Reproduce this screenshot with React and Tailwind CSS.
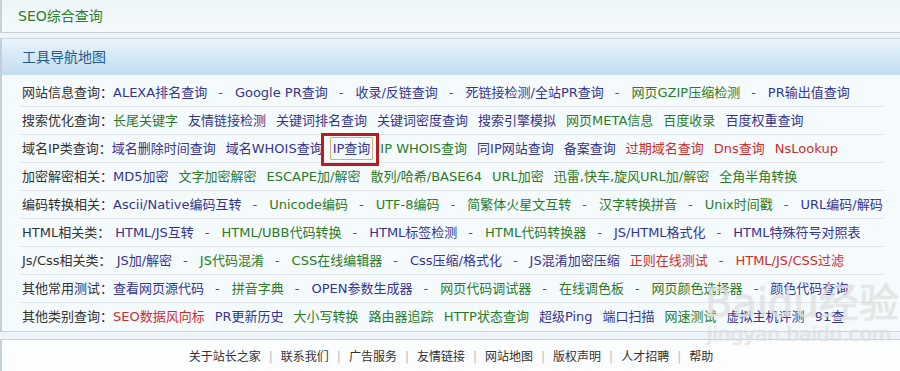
import React from "react";

const B = "text-[#35358f]";
const G = "text-[#2b7a2b]";
const R = "text-[#c9302c]";

const rows = [
  {
    label: "网站信息查询：",
    dash: true,
    items: [
      ["ALEXA排名查询", B],
      ["Google PR查询", B],
      ["收录/反链查询", B],
      ["死链接检测/全站PR查询", B],
      ["网页GZIP压缩检测", G],
      ["PR输出值查询", B],
    ],
  },
  {
    label: "搜索优化查询：",
    items: [
      ["长尾关键字", G],
      ["友情链接检测", B],
      ["关键词排名查询", B],
      ["关键词密度查询", B],
      ["搜索引擎模拟", B],
      ["网页META信息", G],
      ["百度收录", G],
      ["百度权重查询", B],
    ],
  },
  {
    label: "域名IP类查询：",
    items: [
      ["域名删除时间查询", B],
      ["域名WHOIS查询", B],
      ["IP查询", B, true],
      ["IP WHOIS查询", G],
      ["同IP网站查询", B],
      ["备案查询", B],
      ["过期域名查询", R],
      ["Dns查询", R],
      ["NsLookup", R],
    ],
  },
  {
    label: "加密解密相关：",
    items: [
      ["MD5加密", B],
      ["文字加密解密", G],
      ["ESCAPE加/解密", G],
      ["散列/哈希/BASE64", G],
      ["URL加密", G],
      ["迅雷,快车,旋风URL加/解密", G],
      ["全角半角转换", G],
    ],
  },
  {
    label: "编码转换相关：",
    dash: true,
    items: [
      ["Ascii/Native编码互转", B],
      ["Unicode编码", G],
      ["UTF-8编码", G],
      ["简繁体火星文互转", G],
      ["汉字转换拼音", G],
      ["Unix时间戳", G],
      ["URL编码/解码", B],
    ],
  },
  {
    label: "HTML相关类：",
    dash: true,
    pad: true,
    items: [
      ["HTML/JS互转", B],
      ["HTML/UBB代码转换", G],
      ["HTML标签检测", B],
      ["HTML代码转换器", G],
      ["JS/HTML格式化", B],
      ["HTML特殊符号对照表", B],
    ],
  },
  {
    label: "Js/Css相关类：",
    dash: true,
    pad: true,
    items: [
      ["JS加/解密", B],
      ["JS代码混淆", G],
      ["CSS在线编辑器", G],
      ["Css压缩/格式化", B],
      ["JS混淆加密压缩", B],
      ["正则在线测试", R, false, true],
      ["HTML/JS/CSS过滤", R],
    ],
  },
  {
    label: "其他常用测试：",
    dash: true,
    items: [
      ["查看网页源代码", B],
      ["拼音字典", G],
      ["OPEN参数生成器", B],
      ["网页代码调试器", G],
      ["在线调色板", G],
      ["网页颜色选择器", G],
      ["颜色代码查询", B],
    ],
  },
  {
    label: "其他类别查询：",
    items: [
      ["SEO数据风向标", R],
      ["PR更新历史", B],
      ["大小写转换", G],
      ["路由器追踪", G],
      ["HTTP状态查询", G],
      ["超级Ping", B],
      ["端口扫描", B],
      ["网速测试", G],
      ["虚拟主机评测", B],
      ["91查", B],
    ],
  },
];

function Row({ row, last }) {
  return (
    <div
      className={`h-[28px] flex items-center whitespace-nowrap pl-[2px] ${
        last ? "" : "border-b border-[#e1e6ea]"
      }`}
    >
      <span className="text-[#333333]">{row.label}</span>
      {row.pad && <span className="w-[5px]" />}
      {row.items.map(([t, c, boxed, noDash], i) => (
        <React.Fragment key={i}>
          {i > 0 &&
            (row.dash && !noDash ? (
              <span className="text-[#555] ml-[11px] mr-[12px]">-</span>
            ) : (
              <span className="w-[10px]" />
            ))}
          <span className={`${c} relative`}>
            {t}
            {boxed && (
              <>
                <span className="absolute left-[-3px] right-[-3px] top-[-2px] bottom-[-2px] border border-[#c8b27a] rounded-[1px]" />
                <span className="absolute left-[-12px] right-[-9px] top-[-6px] bottom-[-8px] border-[3px] border-[#b81c1c]" />
              </>
            )}
          </span>
        </React.Fragment>
      ))}
    </div>
  );
}

export default function App() {
  const font = "font-['DejaVu_Sans','Noto_Sans_CJK_SC',sans-serif]";
  return (
    <div
      className={`relative w-[900px] h-[371px] overflow-hidden bg-[#eef5fa] text-[13px] ${font}`}
    >
      {/* top panel */}
      <div className="h-[33px] border-l-2 border-b border-l-[#c8d2dc] border-b-[#c6cdd3] bg-gradient-to-b from-[#edf5f7] to-[#f6fbfd] flex items-center pl-[16px]">
        <span className="text-[14px] text-[#2e7d2e]">SEO综合查询</span>
      </div>
      <div className="h-[5px]" />
      {/* nav panel */}
      <div className="border-t border-l-2 border-b border-t-[#ccd5dd] border-l-[#c2d0dc] border-b-[#c8d6e0] bg-[#f5fafd]">
        <div className="h-[36px] flex items-center pl-[20px] bg-[linear-gradient(#e9f4fd,#d6e9f6_45%,#c3ddef)]">
          <span className="text-[14px] text-[#1f5c8c]">工具导航地图</span>
        </div>
        <div className="pt-[4px] pl-[18px] pr-[16px]">
          {rows.map((r, i) => (
            <Row key={i} row={r} last={i === rows.length - 1} />
          ))}
        </div>
      </div>
      <div className="h-[7px]" />
      {/* footer */}
      <div className="h-[40px] border-t border-l-2 border-t-[#c6d4de] border-l-[#c2d0dc] bg-[#fbfdfe] flex justify-center pt-[8px] text-[12px] text-[#333] whitespace-nowrap">
        {["关于站长之家", "联系我们", "广告服务", "友情链接", "网站地图", "版权声明", "人才招聘", "帮助"].map(
          (t, i) => (
            <React.Fragment key={i}>
              {i > 0 && <span className="text-[#bbbbbb] mx-[8px]">|</span>}
              <span>{t}</span>
            </React.Fragment>
          )
        )}
      </div>
      {/* watermark */}
      <div className="absolute left-[705px] top-[283px] pointer-events-none select-none">
        <div className="text-[40px] leading-[40px] text-white/60 [text-shadow:0_0_1px_rgba(120,120,120,0.45)]">
          Baidu经验
        </div>
        <div className="text-[20px] leading-[22px] pl-[2px] text-white/60 [text-shadow:0_0_1px_rgba(120,120,120,0.45)]">
          jingyan.baidu.com
        </div>
      </div>
    </div>
  );
}
